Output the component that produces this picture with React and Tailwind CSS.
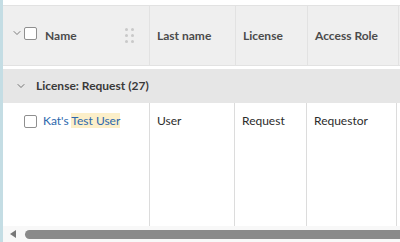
import { ChevronDown } from "lucide-react";

function Checkbox() {
  return (
    <span className="inline-block w-[13px] h-[13px] rounded-[2px] border border-[#8f8f8f] bg-white shrink-0" />
  );
}

function Grip() {
  return (
    <span className="grid grid-cols-2 gap-x-[3px] gap-y-[3px]">
      {[0, 1, 2, 3, 4, 5].map((i) => (
        <span key={i} className="w-[3px] h-[3px] rounded-full bg-[#c9c9c9]" />
      ))}
    </span>
  );
}

export default function App() {
  const font = { fontFamily: "Lato, 'Open Sans', sans-serif" };
  return (
    <div
      className="flex w-[400px] h-[242px] overflow-hidden bg-white text-[12px]"
      style={font}
    >
      {/* left accent */}
      <div className="w-[3px] bg-[#c4dde4] shrink-0" />

      <div className="flex flex-col flex-1 min-w-0">
        <div className="h-[5px] shrink-0" />

        {/* Header */}
        <div className="flex h-[61px] shrink-0 bg-[#efefef] border-y border-[#e2e2e2] text-[#4b4b4b] font-bold">
          <div className="w-[147px] shrink-0 flex items-center border-r border-[#e2e2e2] pl-[8px] pr-[15px]">
            <ChevronDown className="w-[12px] h-[12px] text-[#555] -mt-[5px]" strokeWidth={1.5} />
            <span className="ml-[1px]"><Checkbox /></span>
            <span className="ml-[8px]">Name</span>
            <span className="ml-auto"><Grip /></span>
          </div>
          <div className="w-[86px] shrink-0 flex items-center border-r border-[#e2e2e2] pl-[7px]">
            Last name
          </div>
          <div className="w-[72px] shrink-0 flex items-center border-r border-[#e2e2e2] pl-[7px]">
            License
          </div>
          <div className="w-[91px] shrink-0 flex items-center border-r border-[#e2e2e2] pl-[7px]">
            Access Role
          </div>
          <div className="flex-1" />
        </div>

        <div className="h-[3px] shrink-0" />

        {/* Group row */}
        <div className="flex items-center h-[34px] shrink-0 bg-[#e6e6e6] text-[#3a3a3a] font-bold pl-[12px]">
          <ChevronDown className="w-[12px] h-[12px] text-[#555]" strokeWidth={1.6} />
          <span className="ml-[9px]">License: Request (27)</span>
        </div>

        {/* Data area */}
        <div className="flex flex-1 min-h-0 text-[#2c2c2c]">
          <div className="w-[147px] shrink-0 border-r border-[#dcdcdc] pl-[21px] pt-[9px]">
            <div className="flex items-center">
              <Checkbox />
              <span className="ml-[6px] text-[#2d68ad]">
                Kat's <span className="bg-[#fcefc9]">Test User</span>
              </span>
            </div>
          </div>
          <div className="w-[85px] shrink-0 border-r border-[#dcdcdc] pl-[7px] pt-[9px]">User</div>
          <div className="w-[72px] shrink-0 border-r border-[#dcdcdc] pl-[7px] pt-[9px]">Request</div>
          <div className="w-[90px] shrink-0 border-r border-[#dcdcdc] pl-[7px] pt-[9px]">Requestor</div>
          <div className="flex-1" />
        </div>

        {/* Horizontal scrollbar */}
        <div className="flex items-center h-[16px] shrink-0 bg-[#f8f8f8]">
          <span className="ml-[7px] w-0 h-0 border-y-[4px] border-y-transparent border-r-[6px] border-r-[#777]" />
          <div className="ml-[9px] flex-1 h-[9px] rounded-l-full bg-[#8a8a8a]" />
        </div>
      </div>
    </div>
  );
}
